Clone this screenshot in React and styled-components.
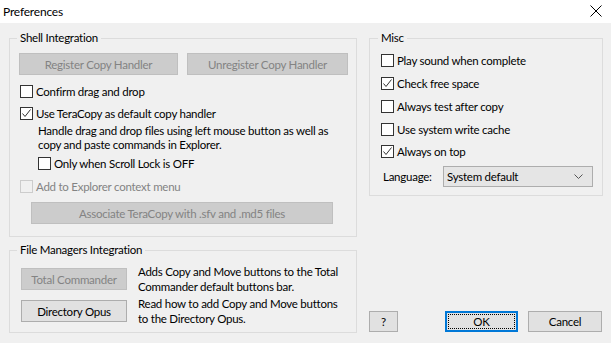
import styled, { createGlobalStyle } from 'styled-components';

const GlobalStyle = createGlobalStyle`
  html, body {
    margin: 0;
    padding: 0;
    background: #f0f0f0;
  }
  body {
    font-family: Lato, "Noto Sans", sans-serif;
    font-size: 11.5px;
    letter-spacing: -0.25px;
    color: #000;
  }
  * {
    box-sizing: border-box;
  }
`;

function CheckMark () {
  return (
    <svg width="11" height="11" viewBox="0 0 11 11">
      <polyline points="1.5,5.5 4,8.5 9.5,1.5" fill="none" stroke="#333" strokeWidth="1" />
    </svg>
  );
}

function Check ({ checked, disabled, label, indent, gap }) {
  return (
    <CheckRow $indent={indent} $gap={gap} $disabled={disabled}>
      <Box $disabled={disabled}>{checked && <CheckMark />}</Box>
      <span>{label}</span>
    </CheckRow>
  );
}

function App () {
  return (
    <Window>
      <GlobalStyle />
      <TitleBar>
        <span>Preferences</span>
        <svg width="12" height="12" viewBox="0 0 12 12">
          <path d="M0.5 0.5 L11.5 11.5 M11.5 0.5 L0.5 11.5" stroke="#000" strokeWidth="1" />
        </svg>
      </TitleBar>
      <Body>
        <LeftCol>
          <Group>
            <Legend>Shell Integration</Legend>
            <ButtonRow>
              <Button disabled $w={159}>Register Copy Handler</Button>
              <Button disabled $w={161}>Unregister Copy Handler</Button>
            </ButtonRow>
            <Check gap={8} label="Confirm drag and drop" />
            <Check gap={6} checked label="Use TeraCopy as default copy handler" />
            <Note>
              Handle drag and drop files using left mouse button as well as<br />
              copy and paste commands in Explorer.
            </Note>
            <Check gap={3} indent={18} label="Only when Scroll Lock is OFF" />
            <Check gap={7} disabled label="Add to Explorer context menu" />
            <Button disabled $w={302} $ml={11} $mt={8}>Associate TeraCopy with .sfv and .md5 files</Button>
          </Group>
          <Group $pb={6}>
            <Legend>File Managers Integration</Legend>
            <ManagerRow $gap={6}>
              <Button disabled $w={106}>Total Commander</Button>
              <ManagerText>
                Adds Copy and Move buttons to the Total<br />
                Commander default buttons bar.
              </ManagerText>
            </ManagerRow>
            <ManagerRow $gap={2}>
              <Button $w={106}>Directory Opus</Button>
              <ManagerText>
                Read how to add Copy and Move buttons<br />
                to the Directory Opus.
              </ManagerText>
            </ManagerRow>
          </Group>
        </LeftCol>
        <RightCol>
          <Group $pl={11} $pb={8}>
            <Legend>Misc</Legend>
            <Check gap={6} label="Play sound when complete" />
            <Check gap={7} checked label="Check free space" />
            <Check gap={7} label="Always test after copy" />
            <Check gap={7} label="Use system write cache" />
            <Check gap={6} checked label="Always on top" />
            <LangRow>
              <LangLabel>Language:</LangLabel>
              <Select>
                <span>System default</span>
                <svg width="9" height="5" viewBox="0 0 9 5">
                  <polyline points="0.5,0.5 4.5,4.5 8.5,0.5" fill="none" stroke="#555" strokeWidth="1" />
                </svg>
              </Select>
            </LangRow>
          </Group>
          <DialogButtons>
            <Button $w={29} $h={21}>?</Button>
            <Spacer />
            <DefaultButton $w={73} $h={21}>OK</DefaultButton>
            <Button $w={74} $h={21}>Cancel</Button>
          </DialogButtons>
        </RightCol>
      </Body>
    </Window>
  );
}

export default App;

const Window = styled.div`
  width: 611px;
  height: 343px;
  background: #f0f0f0;
  display: flex;
  flex-direction: column;
  overflow: hidden;
`;

const TitleBar = styled.div`
  height: 23px;
  flex-shrink: 0;
  background: #fff;
  display: flex;
  align-items: center;
  justify-content: space-between;
  padding: 0 9px 1px 3px;
  font-size: 12px;
  letter-spacing: -0.2px;
`;

const Body = styled.div`
  flex: 1;
  min-height: 0;
  display: flex;
  gap: 12px;
  padding: 7px 8px 10px 9px;
`;

const LeftCol = styled.div`
  width: 348px;
  display: flex;
  flex-direction: column;
  gap: 5px;
`;

const RightCol = styled.div`
  width: 234px;
  display: flex;
  flex-direction: column;
  justify-content: space-between;
  padding-bottom: 1px;
`;

const Group = styled.fieldset`
  margin: 0;
  border: 1px solid #dcdcdc;
  padding: 0 9px ${p => p.$pb ?? 12}px ${p => p.$pl ?? 10}px;
  display: flex;
  flex-direction: column;
  align-items: flex-start;
  min-width: 0;
`;

const Legend = styled.legend`
  padding: 0 3px;
  margin-left: -3px;
  line-height: 16px;
  height: 16px;
`;

const ButtonRow = styled.div`
  display: flex;
  gap: 9px;
  margin: 7px 0 0 -1px;
`;

const Button = styled.button`
  width: ${p => p.$w}px;
  height: ${p => p.$h ?? 22}px;
  margin: ${p => p.$mt ?? 0}px 0 0 ${p => p.$ml ?? 0}px;
  padding: 0;
  font: inherit;
  letter-spacing: inherit;
  color: #000;
  background: #e1e1e1;
  border: 1px solid #adadad;
  flex-shrink: 0;

  &:disabled {
    background: #cccccc;
    border-color: #bfbfbf;
    color: #838383;
  }
`;

const DefaultButton = styled(Button)`
  border: 1px solid #0078d7;
  box-shadow: inset 0 0 0 1px #0078d7;
  outline: 1px dotted #000;
  outline-offset: -4px;
`;

const CheckRow = styled.label`
  display: flex;
  align-items: center;
  gap: 3px;
  height: 16px;
  margin-top: ${p => p.$gap ?? 0}px;
  margin-left: ${p => p.$indent ?? 0}px;
  color: ${p => (p.$disabled ? '#838383' : '#000')};
  white-space: nowrap;
`;

const Box = styled.span`
  width: 13px;
  height: 13px;
  flex-shrink: 0;
  border: 1px solid ${p => (p.$disabled ? '#cccccc' : '#333')};
  background: ${p => (p.$disabled ? '#f0f0f0' : '#fff')};
  display: flex;
  align-items: center;
  justify-content: center;
`;

const Note = styled.div`
  margin: 3px 0 0 18px;
  line-height: 14px;
  white-space: nowrap;
`;

const ManagerRow = styled.div`
  display: flex;
  align-items: center;
  gap: 11px;
  height: 30px;
  margin-top: ${p => p.$gap}px;
  margin-left: 1px;
`;

const ManagerText = styled.div`
  line-height: 15px;
  white-space: nowrap;
`;

const LangRow = styled.div`
  display: flex;
  align-items: center;
  margin-top: 7px;
  margin-left: 2px;
`;

const LangLabel = styled.span`
  width: 60px;
`;

const Select = styled.div`
  width: 150px;
  height: 21px;
  background: #e5e5e5;
  border: 1px solid #adadad;
  display: flex;
  align-items: center;
  justify-content: space-between;
  padding: 0 9px 0 3px;
`;

const DialogButtons = styled.div`
  display: flex;
  gap: 10px;
  padding-right: 1px;
`;

const Spacer = styled.div`
  flex: 1;
`;
